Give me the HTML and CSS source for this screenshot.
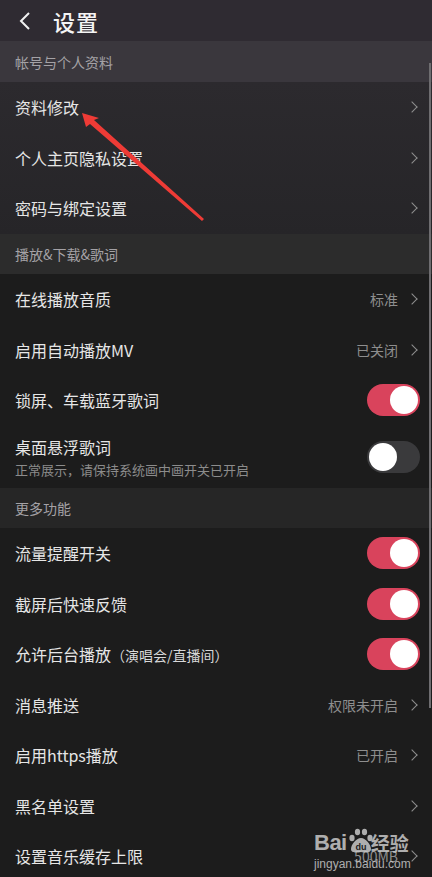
FILE: index.html
```html
<!DOCTYPE html>
<html lang="zh-CN">
<head>
    <meta charset="UTF-8">
    <meta name="viewport" content="width=device-width, initial-scale=1.0">
    <title>设置</title>
    <link rel="stylesheet" href="styles.css">
</head>
<body>
    <div class="page">
        <header class="topbar">
            <svg class="back" width="12" height="18" viewBox="0 0 12 18"><path d="M10 1 L2 9 L10 17" fill="none" stroke="#f2f2f2" stroke-width="2"/></svg>
            <h1>设置</h1>
        </header>

        <div class="section first">帐号与个人资料</div>
        <div class="group purple">
            <div class="row"><span class="label">资料修改</span><span class="side"><i class="chev"></i></span></div>
            <div class="row"><span class="label">个人主页隐私设置</span><span class="side"><i class="chev"></i></span></div>
            <div class="row"><span class="label">密码与绑定设置</span><span class="side"><i class="chev"></i></span></div>
        </div>

        <div class="section second">播放&amp;下载&amp;歌词</div>
        <div class="group">
            <div class="row"><span class="label">在线播放音质</span><span class="side"><span class="value">标准</span><i class="chev"></i></span></div>
            <div class="row"><span class="label">启用自动播放MV</span><span class="side"><span class="value">已关闭</span><i class="chev"></i></span></div>
            <div class="row"><span class="label">锁屏、车载蓝牙歌词</span><span class="switch on"></span></div>
            <div class="row tall">
                <span class="label">桌面悬浮歌词<small>正常展示，请保持系统画中画开关已开启</small></span>
                <span class="switch"></span>
            </div>
        </div>

        <div class="section third">更多功能</div>
        <div class="group">
            <div class="row"><span class="label">流量提醒开关</span><span class="switch on"></span></div>
            <div class="row"><span class="label">截屏后快速反馈</span><span class="switch on"></span></div>
            <div class="row"><span class="label inline">允许后台播放<em>（演唱会/直播间）</em></span><span class="switch on"></span></div>
            <div class="row"><span class="label">消息推送</span><span class="side"><span class="value">权限未开启</span><i class="chev"></i></span></div>
            <div class="row"><span class="label">启用https播放</span><span class="side"><span class="value">已开启</span><i class="chev"></i></span></div>
            <div class="row"><span class="label">黑名单设置</span><span class="side"><i class="chev"></i></span></div>
            <div class="row"><span class="label">设置音乐缓存上限</span><span class="side"><span class="value">500MB</span><i class="chev"></i></span></div>
        </div>

        <div class="scrollbar"></div>

        <svg class="pointer" width="432" height="240" viewBox="0 0 432 240">
            <polygon points="82,113 99,118 94,120 204,219 202,221 90,124 86,127" fill="#ee3b36"/>
        </svg>

        <div class="watermark">
            <div class="wm-logo">
                <span class="wm-bai">Bai</span>
                <svg width="28" height="26" viewBox="0 0 28 26">
                    <ellipse cx="5" cy="10" rx="2.6" ry="3.2" fill="#c8c8c8"/>
                    <ellipse cx="10.5" cy="4" rx="2.6" ry="3.2" fill="#c8c8c8"/>
                    <ellipse cx="17.5" cy="4" rx="2.6" ry="3.2" fill="#c8c8c8"/>
                    <ellipse cx="23" cy="10" rx="2.6" ry="3.2" fill="#c8c8c8"/>
                    <path d="M14 10 C9 10 4 17 4 21 C4 25 9 25 14 24 C19 25 24 25 24 21 C24 17 19 10 14 10 Z" fill="#c8c8c8"/>
                    <text x="14" y="22" text-anchor="middle" class="wm-du">du</text>
                </svg>
                <span class="wm-cn">经验</span>
            </div>
            <div class="wm-url">jingyan.baidu.com</div>
        </div>
    </div>
</body>
</html>
```

FILE: styles.css
```css
* {
    margin: 0;
    padding: 0;
    box-sizing: border-box;
}
body {
    background: #1c1c1c;
    font-family: "Noto Sans CJK SC", "Noto Sans", sans-serif;
    color: #e8e8e8;
    overflow: hidden;
}
.page {
    position: relative;
    width: 432px;
    height: 877px;
    overflow: hidden;
}
.topbar {
    height: 41px;
    display: flex;
    align-items: center;
    padding-left: 19px;
    gap: 22px;
    background: #2f2b32;
}
.topbar h1 {
    font-size: 22px;
    font-weight: 500;
    color: #f4f4f4;
    letter-spacing: 1px;
}
.section {
    display: flex;
    align-items: center;
    padding-left: 15px;
    font-size: 14px;
    color: #a4a2a6;
}
.section.first {
    height: 41px;
    background: #3a373d;
}
.section.second {
    height: 40.5px;
    background: #2c2c2c;
}
.section.third {
    height: 40px;
    background: #262626;
}
.group {
    background: #1c1c1c;
}
.group.purple {
    background: linear-gradient(#2c2a2e, #262528);
}
.row {
    height: 50.5px;
    display: flex;
    align-items: center;
    justify-content: space-between;
    padding: 0 12px 0 15px;
}
.row.tall {
    height: 62.5px;
}
.label {
    font-size: 16px;
    color: #e6e6e6;
    display: flex;
    flex-direction: column;
}
.label.inline {
    flex-direction: row;
    align-items: baseline;
}
.label em {
    font-style: normal;
    font-size: 14px;
    color: #d8d8d8;
}
.label small {
    font-size: 13px;
    color: #8c8c8c;
    margin-top: 1px;
}
.side {
    display: flex;
    align-items: center;
    gap: 10px;
}
.value {
    font-size: 14px;
    color: #8e8e8e;
}
.chev {
    width: 8px;
    height: 8px;
    border-top: 1.5px solid #8f8f8f;
    border-right: 1.5px solid #8f8f8f;
    transform: rotate(45deg);
    margin-right: 4px;
}
.switch {
    position: relative;
    width: 53px;
    height: 32px;
    border-radius: 16px;
    background: #3a3a3c;
}
.switch::after {
    content: "";
    position: absolute;
    top: 2px;
    left: 2px;
    width: 28px;
    height: 28px;
    border-radius: 50%;
    background: #ffffff;
}
.switch.on {
    background: #d9435c;
}
.switch.on::after {
    left: 23px;
}
.scrollbar {
    position: absolute;
    right: 1px;
    top: 63px;
    width: 2px;
    height: 645px;
    background: #6e6d70;
}
.pointer {
    position: absolute;
    left: 0;
    top: 0;
}
.watermark {
    position: absolute;
    left: 314px;
    top: 824px;
    color: #c8c8c8;
    opacity: 0.85;
}
.wm-logo {
    display: flex;
    align-items: flex-end;
    height: 30px;
}
.wm-bai {
    font-family: "Liberation Sans", Arial, sans-serif;
    font-weight: bold;
    font-size: 22px;
    line-height: 22px;
    letter-spacing: -0.5px;
}
.wm-du {
    font-family: "Liberation Sans", Arial, sans-serif;
    font-size: 9px;
    font-weight: bold;
    fill: #1c1c1c;
}
.wm-cn {
    font-size: 19px;
    line-height: 22px;
    font-weight: bold;
    margin-left: -4px;
}
.wm-url {
    font-family: "Liberation Sans", Arial, sans-serif;
    font-size: 12px;
    margin-top: 3px;
}
```
